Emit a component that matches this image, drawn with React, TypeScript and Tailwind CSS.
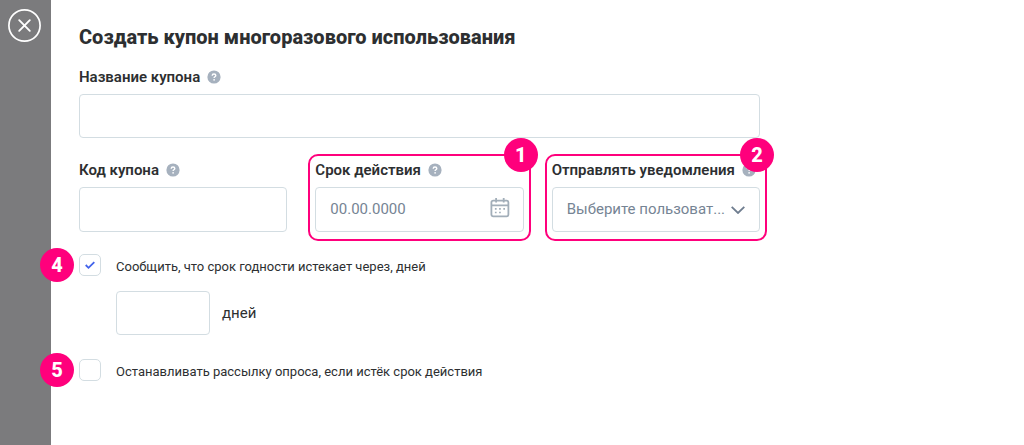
import React, { useState } from 'react';

const fieldBox =
  'block w-full rounded border border-[#d3dde2] bg-white text-[15px] text-[#2d2f31] outline-none focus:border-[#8fa0b3]';

function HelpIcon() {
  return (
    <svg viewBox="0 0 14 14" className="size-3.5 shrink-0" aria-hidden="true">
      <circle cx="7" cy="7" r="6.6" fill="#a6b1be" />
      <path d="M5.2 5.7C5.2 4.6 5.9 4 7 4s1.8.6 1.8 1.6c0 1.2-1.7 1.2-1.7 2.4" fill="none" stroke="#fff" strokeWidth="1.4" />
      <circle cx="7.1" cy="9.8" r=".85" fill="#fff" />
    </svg>
  );
}

function CalendarIcon() {
  return (
    <svg viewBox="0 0 20 20" className="size-5" fill="none" stroke="#a2aeb9" strokeWidth="1.8" aria-hidden="true">
      <rect x="1.4" y="2.6" width="17" height="15.8" rx="1.8" />
      <path d="M1.4 7.3h17M6.1 0v4.6M13.7 0v4.6" />
      <path
        d="M4.9 10.9h1.7M9.1 10.9h1.7M13.3 10.9h1.7M4.9 14.5h1.7M9.1 14.5h1.7"
        strokeWidth="1.6"
      />
    </svg>
  );
}

function Badge({ value, className }: { value: number; className: string }) {
  return (
    <span
      className={`pointer-events-none absolute flex size-[34px] items-center justify-center rounded-full bg-[#ff007c] text-xl font-extrabold text-white ${className}`}
    >
      {value}
    </span>
  );
}

function Highlight({ value }: { value: number }) {
  return (
    <>
      <span className="pointer-events-none absolute -inset-x-[7px] -top-1.5 -bottom-[9px] rounded-[10px] border-2 border-[#ff007c]" />
      <Badge value={value} className="-top-[22px] -right-3.5" />
    </>
  );
}

function Field({
  id,
  label,
  marker,
  children,
}: {
  id: string;
  label: string;
  marker?: number;
  children: React.ReactNode;
}) {
  return (
    <div className="relative min-w-0">
      <div className="mb-[7px] flex items-center gap-[7px]">
        <label htmlFor={id} className="text-[15px] leading-5 font-semibold whitespace-nowrap">
          {label}
        </label>
        <HelpIcon />
      </div>
      {children}
      {marker !== undefined && <Highlight value={marker} />}
    </div>
  );
}

function CheckRow({
  id,
  label,
  marker,
  initial,
}: {
  id: string;
  label: string;
  marker: number;
  initial: boolean;
}) {
  const [checked, setChecked] = useState(initial);
  return (
    <div className="relative flex items-center gap-[15px]">
      <Badge value={marker} className="-top-1.5 -left-[39px]" />
      <span className="grid size-[22px] shrink-0">
        <input
          id={id}
          type="checkbox"
          checked={checked}
          onChange={(e) => setChecked(e.target.checked)}
          className="col-start-1 row-start-1 size-[22px] appearance-none rounded-[5px] border border-[#d3dde2] bg-white"
        />
        {checked && (
          <svg
            viewBox="0 0 22 22"
            className="pointer-events-none col-start-1 row-start-1 size-[22px]"
            fill="none"
            stroke="#4263eb"
            strokeWidth="1.8"
            aria-hidden="true"
          >
            <path d="M6.7 11l2.8 2.8L15.3 8.1" />
          </svg>
        )}
      </span>
      <label htmlFor={id} className="pt-1 text-[13px] leading-[18px]">
        {label}
      </label>
    </div>
  );
}

export default function App() {
  return (
    <div className="flex min-h-screen bg-white font-['Roboto',sans-serif] text-[#2d2f31]">
      <aside className="flex w-[51px] shrink-0 bg-[#7b7b7d] pt-[9px] pl-2">
        <button type="button" aria-label="Закрыть" className="size-[33px] self-start">
          <svg viewBox="0 0 33 33" className="size-[33px]" fill="none" stroke="#fff" aria-hidden="true">
            <circle cx="16.5" cy="16.5" r="15.6" strokeWidth="1.7" />
            <path d="M11.2 11.2l10.6 10.6M21.8 11.2L11.2 21.8" strokeWidth="1.9" strokeLinecap="round" />
          </svg>
        </button>
      </aside>
      <main className="min-w-0 flex-1 px-7 pt-[23px] pb-6">
        <form className="max-w-[681px]" onSubmit={(e) => e.preventDefault()}>
          <h1 className="mb-4 text-xl leading-7 font-extrabold">Создать купон многоразового использования</h1>

          <Field id="coupon-name" label="Название купона">
            <input id="coupon-name" type="text" className={`${fieldBox} h-11 px-4`} />
          </Field>

          <div className="mt-[22px] grid grid-cols-3 gap-7">
            <Field id="coupon-code" label="Код купона">
              <input id="coupon-code" type="text" className={`${fieldBox} h-[45px] px-4`} />
            </Field>
            <Field id="valid-until" label="Срок действия" marker={1}>
              <div className="grid items-center">
                <input
                  id="valid-until"
                  type="text"
                  placeholder="00.00.0000"
                  className={`${fieldBox} col-start-1 row-start-1 h-[45px] pr-11 pb-0.5 pl-3.5 placeholder:text-[#768494]`}
                />
                <span className="pointer-events-none col-start-1 row-start-1 mr-3.5 mb-1 justify-self-end">
                  <CalendarIcon />
                </span>
              </div>
            </Field>
            <Field id="notify" label="Отправлять уведомления" marker={2}>
              <div className="grid items-center">
                <select
                  id="notify"
                  className={`${fieldBox} col-start-1 row-start-1 h-[45px] appearance-none pr-8 pl-3.5 text-[#768494]`}
                >
                  <option>Выберите пользоват...</option>
                </select>
                <svg
                  viewBox="0 0 14 8"
                  className="pointer-events-none col-start-1 row-start-1 mr-[15px] h-2 w-3.5 justify-self-end"
                  fill="none"
                  stroke="#6f7d8f"
                  strokeWidth="1.8"
                  aria-hidden="true"
                >
                  <path d="M.7.8L7 7 13.3.8" />
                </svg>
              </div>
            </Field>
          </div>

          <div className="mt-[22px]">
            <CheckRow id="expiry-notice" label="Сообщить, что срок годности истекает через, дней" marker={4} initial={true} />
          </div>
          <div className="mt-[15px] flex items-center gap-3 pl-[37px]">
            <div className="w-[94px]">
              <input id="expiry-days" type="text" inputMode="numeric" className={`${fieldBox} h-11 px-3`} />
            </div>
            <label htmlFor="expiry-days" className="text-[15px] leading-5">
              дней
            </label>
          </div>
          <div className="mt-6">
            <CheckRow id="stop-sending" label="Останавливать рассылку опроса, если истёк срок действия" marker={5} initial={false} />
          </div>
        </form>
      </main>
    </div>
  );
}
